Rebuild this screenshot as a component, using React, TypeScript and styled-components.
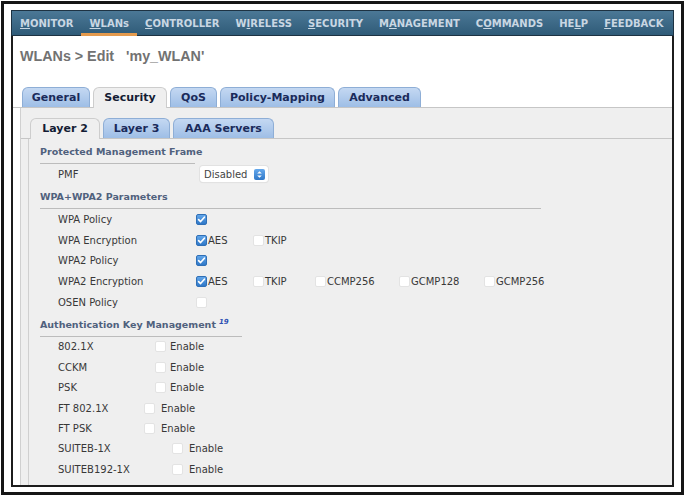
import React from 'react';
import styled, { createGlobalStyle } from 'styled-components';

const GlobalStyle = createGlobalStyle`
  html, body {
    margin: 0;
    padding: 0;
    background: #fff;
  }
  body {
    font-family: "DejaVu Sans", Verdana, sans-serif;
  }
`;

const Frame = styled.div`
  box-sizing: border-box;
  width: 683px;
  height: 494px;
  margin: 1px 0 0 1px;
  border: 3px solid #151515;
  padding: 6px 7px 5px 7px;
  display: flex;
  background: #fff;
`;

const Window = styled.div`
  flex: 1;
  min-width: 0;
  display: flex;
  flex-direction: column;
`;

const NavBar = styled.nav`
  box-sizing: border-box;
  height: 26px;
  flex: none;
  display: flex;
  align-items: stretch;
  gap: 16px;
  padding-left: 8px;
  border: 1px solid #1d3242;
  background: linear-gradient(#4b7896, #2f5b78);
`;

const NavItem = styled.span<{ $active?: boolean }>`
  position: relative;
  display: flex;
  align-items: center;
  font-size: 10px;
  font-weight: bold;
  color: #c9d7e3;
  white-space: nowrap;

  u {
    text-decoration: underline;
    text-underline-offset: 1px;
  }

  ${p =>
    p.$active &&
    `
    &::after {
      content: '';
      position: absolute;
      left: -9px;
      right: -8px;
      bottom: -1px;
      height: 3px;
      background: #e49a4d;
    }
  `}
`;

const Body = styled.div`
  flex: 1;
  min-height: 0;
  display: flex;
  flex-direction: column;
  overflow: hidden;
  border: 2px solid #1c1c1c;
  border-top: none;
`;

const Title = styled.h1`
  margin: 11px 0 0 7px;
  font: bold 14.3px/18px "Liberation Sans", Arial, sans-serif;
  color: #727272;
  white-space: pre;
`;

const TabStrip = styled.div<{ $top: number; $inset: number }>`
  flex: none;
  display: flex;
  align-items: flex-end;
  gap: 3px;
  margin-top: ${p => p.$top}px;
  padding-left: ${p => p.$inset}px;
  border-bottom: 1px solid #c6c6c6;
`;

const Tab = styled.div<{ $w: number; $active?: boolean }>`
  box-sizing: border-box;
  width: ${p => p.$w}px;
  height: ${p => (p.$active ? 21 : 20)}px;
  margin-bottom: ${p => (p.$active ? -1 : 0)}px;
  border: 1px solid ${p => (p.$active ? '#cdcdcd' : '#8eaed6')};
  border-bottom: none;
  border-radius: 6px 6px 0 0;
  background: ${p => (p.$active ? '#efefef' : 'linear-gradient(#c4d8f2, #9ebee6)')};
  font-size: 11px;
  font-weight: bold;
  line-height: 19px;
  color: ${p => (p.$active ? '#141c34' : '#1a2a5a')};
  text-align: center;
  white-space: nowrap;
`;

const Panel = styled.div<{ $inset: number; $pad?: number }>`
  flex: 1;
  min-height: 0;
  display: flex;
  flex-direction: column;
  margin-left: ${p => p.$inset}px;
  padding-left: ${p => p.$pad || 0}px;
  border-left: 1px solid #d0d0d0;
  background: #efefef;
`;

const SectionTitle = styled.div<{ $w: number; $top: number }>`
  width: ${p => p.$w}px;
  height: 14px;
  margin-top: ${p => p.$top}px;
  padding-bottom: 4px;
  border-bottom: 1px solid #bcbcbc;
  font-size: 9.5px;
  font-weight: bold;
  line-height: 14px;
  color: #50617d;
  white-space: nowrap;

  sup {
    margin-left: 3px;
    font-size: 7px;
    line-height: 0;
    font-style: italic;
    color: #2d4fb3;
  }
`;

const Row = styled.div<{ $h: number }>`
  display: flex;
  align-items: center;
  height: ${p => p.$h}px;
  padding-left: 18px;
  font-size: 10px;
  color: #383838;
  white-space: nowrap;
`;

const Label = styled.span<{ $w: number }>`
  flex: none;
  width: ${p => p.$w}px;
`;

const Option = styled.span<{ $w?: number; $gap?: number }>`
  display: inline-flex;
  align-items: center;
  gap: ${p => (p.$gap === undefined ? 1 : p.$gap)}px;
  width: ${p => (p.$w ? `${p.$w}px` : 'auto')};
  flex: none;
`;

const Box = styled.span<{ $on?: boolean }>`
  box-sizing: border-box;
  flex: none;
  width: 11px;
  height: 11px;
  display: inline-flex;
  align-items: center;
  justify-content: center;
  border-radius: 2px;
  border: 1px solid ${p => (p.$on ? '#2f6fb6' : '#e3e3e3')};
  background: ${p => (p.$on ? 'linear-gradient(#62a6ea, #2f78c8)' : '#fff')};
`;

const Select = styled.span`
  display: inline-flex;
  align-items: center;
  gap: 7px;
  height: 16px;
  padding: 0 3px 0 4px;
  border-radius: 3px;
  background: #fff;
  box-shadow: 0 0 0 1px #e2e2e2, 0 1px 1px rgba(0, 0, 0, 0.08);
  color: #454545;
`;

const Stepper = styled.span`
  display: inline-flex;
  width: 11px;
  height: 11px;
  border-radius: 2px;
  background: linear-gradient(#64a8ec, #3078c8);
`;

function Check({ on }: { on?: boolean }) {
  return (
    <Box $on={on}>
      {on && (
        <svg width="9" height="9" viewBox="0 0 9 9">
          <path d="M1.6 4.6 L3.6 6.6 L7.4 2.2" fill="none" stroke="#fff" strokeWidth="1.6" strokeLinecap="round" strokeLinejoin="round" />
        </svg>
      )}
    </Box>
  );
}

const nav = [
  { pre: '', key: 'M', post: 'ONITOR' },
  { pre: '', key: 'W', post: 'LANs', active: true },
  { pre: '', key: 'C', post: 'ONTROLLER' },
  { pre: 'W', key: 'I', post: 'RELESS' },
  { pre: '', key: 'S', post: 'ECURITY' },
  { pre: 'M', key: 'A', post: 'NAGEMENT' },
  { pre: 'C', key: 'O', post: 'MMANDS' },
  { pre: 'HE', key: 'L', post: 'P' },
  { pre: '', key: 'F', post: 'EEDBACK' },
];

const mainTabs = [
  { name: 'General', w: 68 },
  { name: 'Security', w: 74, active: true },
  { name: 'QoS', w: 47 },
  { name: 'Policy-Mapping', w: 115 },
  { name: 'Advanced', w: 83 },
];

const subTabs = [
  { name: 'Layer 2', w: 70, active: true },
  { name: 'Layer 3', w: 67 },
  { name: 'AAA Servers', w: 101 },
];

const wpa2Ciphers = [
  { name: 'AES', w: 57, on: true },
  { name: 'TKIP', w: 62 },
  { name: 'CCMP256', w: 84 },
  { name: 'GCMP128', w: 85 },
  { name: 'GCMP256' },
];

const akm = [
  { name: '802.1X', w: 97, gap: 4 },
  { name: 'CCKM', w: 97, gap: 4 },
  { name: 'PSK', w: 97, gap: 4 },
  { name: 'FT 802.1X', w: 86, gap: 6 },
  { name: 'FT PSK', w: 86, gap: 6 },
  { name: 'SUITEB-1X', w: 114, gap: 6 },
  { name: 'SUITEB192-1X', w: 114, gap: 6 },
];

export default function App() {
  return (
    <>
      <GlobalStyle />
      <Frame>
        <Window>
          <NavBar>
            {nav.map(n => (
              <NavItem key={n.key + n.post} $active={n.active}>
                {n.pre}
                <u>{n.key}</u>
                {n.post}
              </NavItem>
            ))}
          </NavBar>
          <Body>
            <Title>{"WLANs > Edit   'my_WLAN'"}</Title>
            <TabStrip $top={22} $inset={9}>
              {mainTabs.map(t => (
                <Tab key={t.name} $w={t.w} $active={t.active}>
                  {t.name}
                </Tab>
              ))}
            </TabStrip>
            <Panel $inset={7}>
              <TabStrip $top={10} $inset={9}>
                {subTabs.map(t => (
                  <Tab key={t.name} $w={t.w} $active={t.active}>
                    {t.name}
                  </Tab>
                ))}
              </TabStrip>
              <Panel $inset={7} $pad={11}>
                <SectionTitle $w={155} $top={6}>Protected Management Frame</SectionTitle>
                <Row $h={20}>
                  <Label $w={142}>PMF</Label>
                  <Select>
                    Disabled
                    <Stepper>
                      <svg width="11" height="11" viewBox="0 0 11 11">
                        <path d="M3.2 4.6 L5.5 2.3 L7.8 4.6 Z M3.2 6.4 L5.5 8.7 L7.8 6.4 Z" fill="#fff" />
                      </svg>
                    </Stepper>
                  </Select>
                </Row>

                <SectionTitle $w={501} $top={6}>WPA+WPA2 Parameters</SectionTitle>
                <Row $h={20.75}>
                  <Label $w={138}>WPA Policy</Label>
                  <Check on />
                </Row>
                <Row $h={20.75}>
                  <Label $w={138}>WPA Encryption</Label>
                  {wpa2Ciphers.slice(0, 2).map(c => (
                    <Option key={c.name} $w={c.w}>
                      <Check on={c.on} />
                      {c.name}
                    </Option>
                  ))}
                </Row>
                <Row $h={20.75}>
                  <Label $w={138}>WPA2 Policy</Label>
                  <Check on />
                </Row>
                <Row $h={20.75}>
                  <Label $w={138}>WPA2 Encryption</Label>
                  {wpa2Ciphers.map(c => (
                    <Option key={c.name} $w={c.w}>
                      <Check on={c.on} />
                      {c.name}
                    </Option>
                  ))}
                </Row>
                <Row $h={20.75}>
                  <Label $w={138}>OSEN Policy</Label>
                  <Check />
                </Row>

                <SectionTitle $w={202} $top={5}>
                  Authentication Key Management<sup>19</sup>
                </SectionTitle>
                {akm.map(a => (
                  <Row key={a.name} $h={20.4}>
                    <Label $w={a.w}>{a.name}</Label>
                    <Option $gap={a.gap}>
                      <Check />
                      Enable
                    </Option>
                  </Row>
                ))}
              </Panel>
            </Panel>
          </Body>
        </Window>
      </Frame>
    </>
  );
}
